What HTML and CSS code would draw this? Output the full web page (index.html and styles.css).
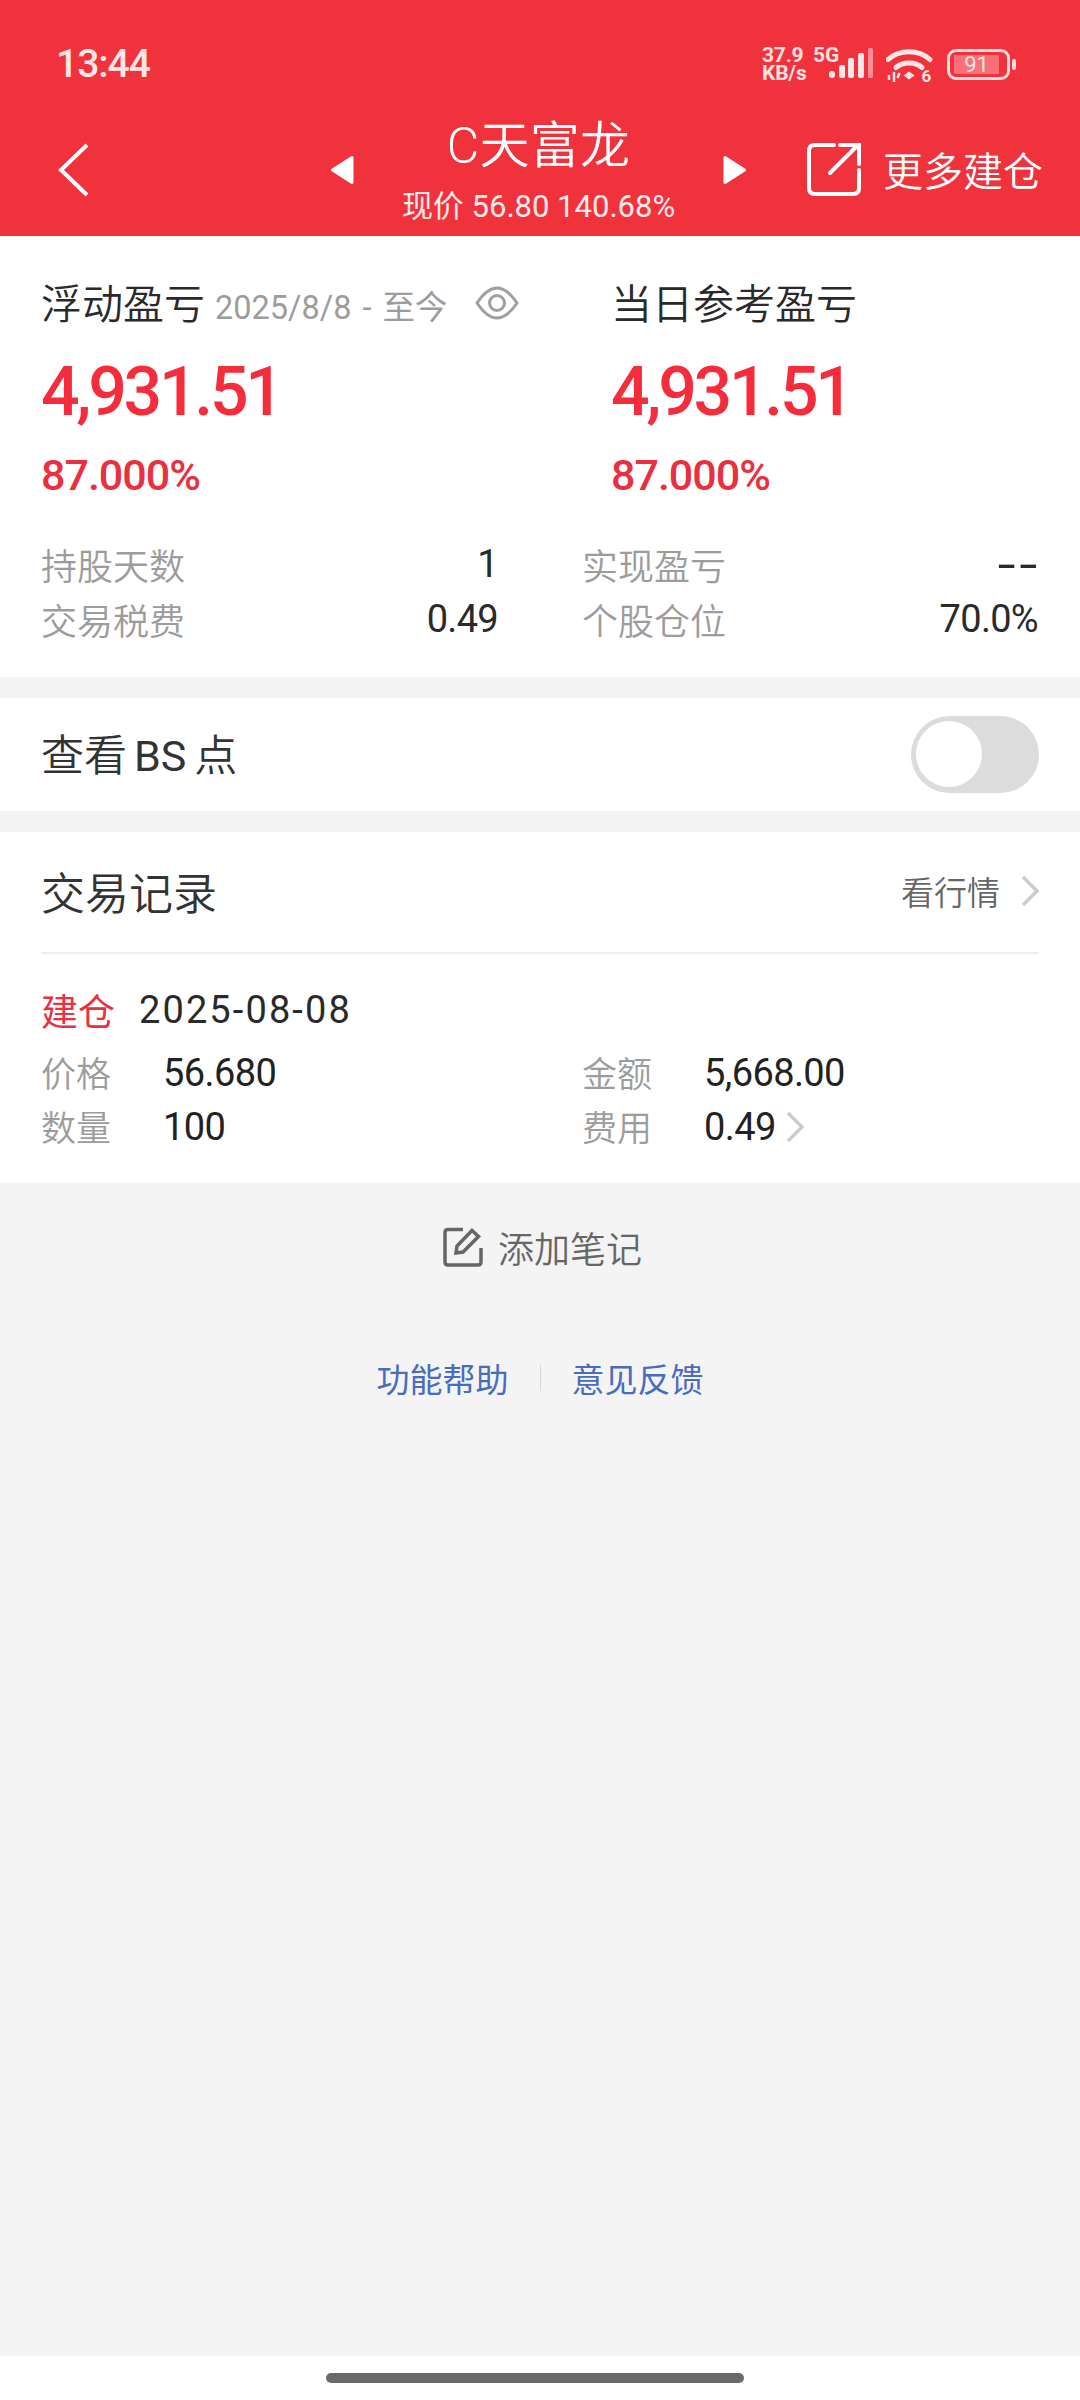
FILE: index.html
```html
<!DOCTYPE html>
<html lang="zh-CN">
<head>
<meta charset="utf-8">
<title>C天富龙</title>
<link rel="stylesheet" href="styles.css">
</head>
<body>
<div class="app">
  <header class="header">
    <div class="status">
      <span class="time">13:44</span>
      <div class="status-icons">
        <div class="speed">37.9<br>KB/s</div>
        <div class="net"><span class="net-5g">5G</span>
          <svg class="signal" viewBox="0 0 44 30"><rect x="0" y="23" width="6" height="7" rx="3" class="bar"/><rect x="10" y="17" width="6" height="13" rx="2" class="bar"/><rect x="19" y="10" width="6" height="20" rx="2" class="bar"/><rect x="29" y="5" width="6" height="25" rx="2" class="bar"/><rect x="39" y="0" width="5" height="30" rx="1.5" class="bar-dim"/></svg>
        </div>
        <div class="wifi-wrap">
          <svg class="wifi" viewBox="0 0 50 42"><path d="M2 12.500 C13 2 33 2 44 12.500" class="wifi-arc"/><path d="M10 20.500 C17 14.500 29 14.500 36 20.500" class="wifi-arc"/><path d="M17.500 28.500 L23 24.500 L28.500 28.500 L23 32.500 Z" class="wifi-dot"/><path d="M3 28 V33 M8 25 V35 M13.500 26 L11.500 31" class="wifi-tick"/><text x="35.500" y="35" class="wifi-six">6</text></svg>
        </div>
        <div class="battery"><div class="battery-body"><div class="battery-fill">91</div></div><span class="battery-nub"></span></div>
      </div>
    </div>
    <nav class="nav">
      <svg class="back" viewBox="0 0 32 54"><path d="M29 2 L3 27 L29 52"/></svg>
      <div class="title-group">
        <svg class="tri" viewBox="0 0 24 30"><path d="M22 2.500 V27.500 L2.500 15 Z"/></svg>
        <div class="title-stack">
          <div class="title">C天富龙</div>
          <div class="subtitle">现价 56.80 140.68%</div>
        </div>
        <svg class="tri" viewBox="0 0 24 30"><path d="M2 2.500 V27.500 L21.500 15 Z"/></svg>
      </div>
      <div class="more">
        <svg class="share" viewBox="0 0 54 54"><path d="M27 3 H8 Q2 3 2 9 V46 Q2 52 8 52 H46 Q52 52 52 46 V28"/><path d="M23 31 L50 4 M33 3 H52 V22"/></svg>
        <span>更多建仓</span>
      </div>
    </nav>
  </header>

  <main class="main">
    <section class="card pnl">
      <div class="pnl-head">
        <div class="pnl-col">
          <div class="pnl-title"><span>浮动盈亏</span><span class="pnl-date">2025/8/8 - 至今</span>
            <svg class="eye" viewBox="0 0 44 34"><path d="M2 17 C10 5 16 2 22 2 C28 2 34 5 42 17 C34 29 28 32 22 32 C16 32 10 29 2 17 Z"/><circle cx="22" cy="17" r="7.500"/></svg>
          </div>
          <div class="pnl-num">4,931.51</div>
          <div class="pnl-pct">87.000%</div>
        </div>
        <div class="pnl-col">
          <div class="pnl-title"><span>当日参考盈亏</span></div>
          <div class="pnl-num">4,931.51</div>
          <div class="pnl-pct">87.000%</div>
        </div>
      </div>
      <div class="stats">
        <div class="stat"><span class="label">持股天数</span><span class="value">1</span></div>
        <div class="stat"><span class="label">实现盈亏</span><span class="value value-dash">--</span></div>
        <div class="stat"><span class="label">交易税费</span><span class="value">0.49</span></div>
        <div class="stat"><span class="label">个股仓位</span><span class="value">70.0%</span></div>
      </div>
    </section>

    <section class="card bs">
      <span class="bs-text">查看<span class="bs-latin">BS</span>点</span>
      <div class="toggle"><span class="knob"></span></div>
    </section>

    <section class="card trades">
      <div class="trades-head">
        <span class="trades-title">交易记录</span>
        <div class="quote"><span>看行情</span><svg class="chev" viewBox="0 0 18 32"><path d="M2 2 L16 16 L2 30"/></svg></div>
      </div>
      <div class="trade-date"><span class="trade-type">建仓</span><span class="trade-day">2025-08-08</span></div>
      <div class="trade-grid">
        <div class="trade-cell"><span class="trade-label">价格</span><span class="trade-value">56.680</span></div>
        <div class="trade-cell"><span class="trade-label">金额</span><span class="trade-value">5,668.00</span></div>
        <div class="trade-cell"><span class="trade-label">数量</span><span class="trade-value">100</span></div>
        <div class="trade-cell"><span class="trade-label">费用</span><span class="trade-value">0.49</span><svg class="chev chev-fee" viewBox="0 0 18 32"><path d="M2 2 L16 16 L2 30"/></svg></div>
      </div>
    </section>

    <div class="note">
      <svg class="note-icon" viewBox="0 0 40 40"><path d="M20 2.500 H5 Q2 2.500 2 5.500 V35 Q2 38 5 38 H35 Q38 38 38 35 V21"/><path d="M13 26 L14 19 L29 3.500 L35.500 9.500 L20 25 Z"/></svg>
      <span>添加笔记</span>
    </div>

    <div class="links">
      <span>功能帮助</span><i class="links-sep"></i><span>意见反馈</span>
    </div>
  </main>

  <footer class="navbar"><span class="pill"></span></footer>
</div>
</body>
</html>
```
FILE: styles.css
```css
* { box-sizing: border-box; }
html, body { margin: 0; padding: 0; }
body { width: 1080px; height: 2400px; font-family: Roboto, "Noto Sans CJK SC", sans-serif; color: #2a2a2a; background: #f4f4f4; overflow: hidden; }
.app { display: flex; flex-direction: column; height: 2400px; }

.header { background: #f0323c; color: #fff; height: 236px; flex: none; display: flex; flex-direction: column; }
.status { height: 130px; display: flex; align-items: flex-start; justify-content: space-between; padding: 43px 64px 0 56px; }
.time { font-size: 39px; line-height: 42px; font-weight: 500; color: #ffe6e6; letter-spacing: -1px; }
.status-icons { display: flex; align-items: flex-start; color: #ffe0e0; }
.speed { width: 51px; font-size: 21px; line-height: 18px; font-weight: 700; margin-top: 3px; letter-spacing: -.2px; white-space: nowrap; }
.net { position: relative; width: 73px; height: 36px; }
.net-5g { position: absolute; left: 0; top: 3px; font-size: 21px; line-height: 18px; font-weight: 700; }
.signal { position: absolute; left: 16px; top: 5px; width: 44px; height: 30px; }
.bar { fill: #ffe6e6; }
.bar-dim { fill: #ff8f95; }
.wifi-wrap { width: 61px; }
.wifi { display: block; width: 50px; height: 42px; margin-top: 4px; }
.wifi-arc { fill: none; stroke: #ffe6e6; stroke-width: 5; stroke-linecap: round; }
.wifi-dot { fill: #ffe6e6; }
.wifi-tick { fill: none; stroke: #ffe6e6; stroke-width: 2.500; }
.wifi-six { fill: #ffe6e6; font-size: 17px; font-weight: 700; font-family: Roboto, sans-serif; }
.battery { display: flex; align-items: center; margin-top: 6px; gap: 2px; }
.battery-body { width: 63px; height: 31px; border: 3px solid #ffdada; border-radius: 9px; padding: 3px 8px 3px 4px; }
.battery-fill { height: 19px; width: 100%; background: #fb6f77; border-radius: 1px; color: #ffe6e6; font-size: 22px; line-height: 19px; text-align: center; }
.battery-nub { width: 4px; height: 11px; background: #ffdada; border-radius: 2px; }

.nav { flex: 1; display: flex; align-items: center; padding: 0 37px 0 58px; }
.back { width: 32px; height: 54px; margin-top: -26px; fill: none; stroke: #fff; stroke-width: 4; }
.title-group { display: flex; align-items: center; margin-left: 240px; width: 417px; justify-content: space-between; }
.tri { width: 24px; height: 30px; margin-top: -26px; fill: #fff; stroke: #fff; stroke-width: 3; stroke-linejoin: round; }
.title-stack { display: flex; flex-direction: column; align-items: center; margin-top: -25px; }
.title { font-size: 50px; line-height: 60px; letter-spacing: .3px; font-weight: 350; }
.subtitle { font-size: 31px; line-height: 36px; margin-top: 13px; letter-spacing: 0; color: #ffeaea; white-space: nowrap; }
.more { display: flex; align-items: center; gap: 22px; font-size: 40px; font-weight: 350; margin-left: auto; margin-top: -28px; }
.share { width: 54px; height: 54px; fill: none; stroke: #fff; stroke-width: 4; stroke-linecap: round; }

.main { flex: 1; display: flex; flex-direction: column; }
.card { background: #fff; }

.pnl { height: 441px; margin-bottom: 21px; }
.pnl-head { display: grid; grid-template-columns: 570px 1fr; padding: 42px 0 0 41px; }
.pnl-title { display: flex; align-items: center; font-size: 41px; font-weight: 350; line-height: 54px; height: 54px; white-space: nowrap; }
.pnl-date { font-size: 32.500px; font-weight: 400; word-spacing: 3px; color: #9c9c9c; margin: 6px 0 0 10px; }
.eye { width: 44px; height: 34px; margin: -4px 0 0 27px; fill: none; stroke: #a0a0a0; stroke-width: 3; }
.pnl-num { font-size: 68px; line-height: 80px; font-weight: 500; color: #f52c3c; letter-spacing: -3.3px; margin-top: 20px; }
.pnl-pct { font-size: 43px; line-height: 50px; font-weight: 500; color: #ea2f40; letter-spacing: -1px; margin-top: 18px; }
.stats { display: grid; grid-template-columns: 457px 456px; column-gap: 84px; padding-left: 41px; margin-top: 36px; }
.stat { display: flex; justify-content: space-between; align-items: center; height: 55px; }
.label { font-size: 36px; font-weight: 350; color: #9c9c9c; }
.value { font-size: 38px; color: #2a2a2a; letter-spacing: -.7px; }
.value-dash { font-size: 66px; font-weight: 300; line-height: 1; letter-spacing: 3px; margin: 2px -3px 0 0; }

.bs { height: 113px; margin-bottom: 21px; display: flex; align-items: center; justify-content: space-between; padding: 0 41px 0 41px; }
.bs-text { font-size: 43px; font-weight: 350; color: #333; margin-top: -6px; }
.bs-latin { margin: 0 8px 0 7px; font-weight: 400; }
.toggle { width: 128px; height: 77px; border-radius: 39px; background: #dcdcdc; padding: 5px; }
.knob { display: block; width: 66px; height: 66px; border-radius: 50%; background: #fff; }

.trades { height: 351px; padding: 0 41px 0 41px; }
.trades-head { display: flex; align-items: center; justify-content: space-between; height: 122px; border-bottom: 2px solid #efefef; }
.trades-title { font-size: 44px; font-weight: 350; color: #333; margin-top: -3px; }
.quote { display: flex; align-items: center; gap: 21px; font-size: 33px; font-weight: 350; color: #666; margin-top: -2px; }
.chev { width: 18px; height: 32px; fill: none; stroke: #cccccc; stroke-width: 3.500; flex: none; }
.trade-date { display: flex; align-items: center; gap: 24px; margin-top: 28px; height: 56px; }
.trade-type { color: #e8323f; font-weight: 400; font-size: 37px; }
.trade-day { font-size: 38px; letter-spacing: 2.100px; color: #2a2a2a; }
.trade-grid { display: grid; grid-template-columns: 457px 456px; column-gap: 84px; margin-top: 8px; }
.trade-cell { display: flex; align-items: center; height: 54px; }
.trade-label { width: 122px; font-size: 35px; font-weight: 350; color: #9c9c9c; margin-top: -4px; }
.trade-value { font-size: 38px; color: #222; letter-spacing: -.6px; }
.chev-fee { margin-left: 10px; }

.note { display: flex; align-items: center; justify-content: center; gap: 15px; margin-top: 40px; height: 48px; font-size: 36px; font-weight: 350; color: #666; padding-left: 5px; }
.note-icon { width: 40px; height: 40px; fill: none; stroke: #666; stroke-width: 3.500; }
.links { display: flex; align-items: center; justify-content: center; margin-top: 82px; height: 50px; font-size: 33px; font-weight: 400; color: #4a6cbf; }
.links-sep { width: 1px; height: 26px; background: #d8d8d8; margin: 0 31px; }

.navbar { height: 44px; flex: none; background: #fff; display: flex; justify-content: center; padding-top: 17px; padding-right: 10px; }
.pill { width: 418px; height: 10px; border-radius: 5px; background: #6a6a6a; }
```
